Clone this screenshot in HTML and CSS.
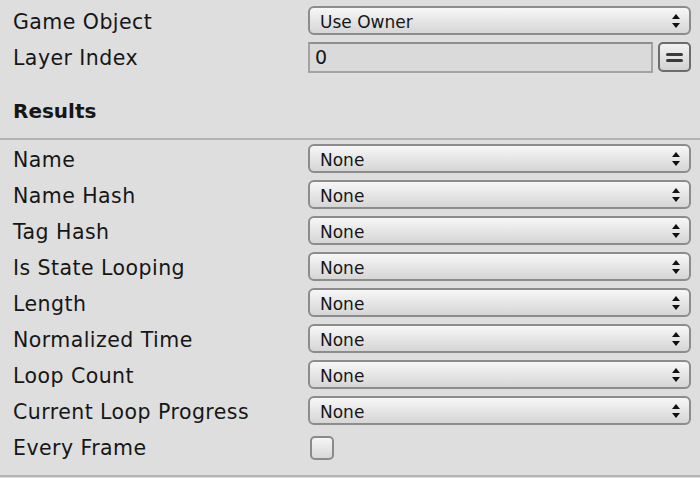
FILE: index.html
```html
<!DOCTYPE html>
<html>
<head>
<meta charset="utf-8">
<link rel="stylesheet" href="styles.css">
</head>
<body>
<div class="panel">
  <div class="row">
    <div class="label">Game Object</div>
    <div class="popup"><span class="ptext">Use Owner</span><span class="arrows"><svg width="8" height="14" viewBox="0 0 8 14"><path d="M4 0 L8 5 L0 5 Z M0 9 L8 9 L4 14 Z" fill="#111"/></svg></span></div>
  </div>
  <div class="row row-field">
    <div class="label label-field">Layer Index</div>
    <div class="fieldwrap">
      <div class="field">0</div>
      <div class="eqbtn"><svg width="17" height="9" viewBox="0 0 17 9"><rect x="0" y="0" width="17" height="3" rx="1.5" fill="#3a3a3a"/><rect x="0" y="6" width="17" height="3" rx="1.5" fill="#3a3a3a"/></svg></div>
    </div>
  </div>
  <div class="header">Results</div>
  <div class="list">
    <div class="row"><div class="label">Name</div><div class="popup"><span class="ptext">None</span><span class="arrows"><svg width="8" height="14" viewBox="0 0 8 14"><path d="M4 0 L8 5 L0 5 Z M0 9 L8 9 L4 14 Z" fill="#111"/></svg></span></div></div>
    <div class="row"><div class="label">Name Hash</div><div class="popup"><span class="ptext">None</span><span class="arrows"><svg width="8" height="14" viewBox="0 0 8 14"><path d="M4 0 L8 5 L0 5 Z M0 9 L8 9 L4 14 Z" fill="#111"/></svg></span></div></div>
    <div class="row"><div class="label">Tag Hash</div><div class="popup"><span class="ptext">None</span><span class="arrows"><svg width="8" height="14" viewBox="0 0 8 14"><path d="M4 0 L8 5 L0 5 Z M0 9 L8 9 L4 14 Z" fill="#111"/></svg></span></div></div>
    <div class="row"><div class="label">Is State Looping</div><div class="popup"><span class="ptext">None</span><span class="arrows"><svg width="8" height="14" viewBox="0 0 8 14"><path d="M4 0 L8 5 L0 5 Z M0 9 L8 9 L4 14 Z" fill="#111"/></svg></span></div></div>
    <div class="row"><div class="label">Length</div><div class="popup"><span class="ptext">None</span><span class="arrows"><svg width="8" height="14" viewBox="0 0 8 14"><path d="M4 0 L8 5 L0 5 Z M0 9 L8 9 L4 14 Z" fill="#111"/></svg></span></div></div>
    <div class="row"><div class="label">Normalized Time</div><div class="popup"><span class="ptext">None</span><span class="arrows"><svg width="8" height="14" viewBox="0 0 8 14"><path d="M4 0 L8 5 L0 5 Z M0 9 L8 9 L4 14 Z" fill="#111"/></svg></span></div></div>
    <div class="row"><div class="label">Loop Count</div><div class="popup"><span class="ptext">None</span><span class="arrows"><svg width="8" height="14" viewBox="0 0 8 14"><path d="M4 0 L8 5 L0 5 Z M0 9 L8 9 L4 14 Z" fill="#111"/></svg></span></div></div>
    <div class="row"><div class="label">Current Loop Progress</div><div class="popup"><span class="ptext">None</span><span class="arrows"><svg width="8" height="14" viewBox="0 0 8 14"><path d="M4 0 L8 5 L0 5 Z M0 9 L8 9 L4 14 Z" fill="#111"/></svg></span></div></div>
    <div class="row row-check"><div class="label">Every Frame</div><div class="checkcell"><div class="checkbox"></div></div></div>
  </div>
  <div class="footer"></div>
</div>
</body>
</html>
```
FILE: styles.css
```css
html, body {
  margin: 0;
  padding: 0;
  background: #dedede;
}
body {
  width: 700px;
  height: 478px;
  overflow: hidden;
  font-family: "DejaVu Sans", sans-serif;
  color: #161616;
}
.panel {
  padding-top: 6px;
}
.row {
  display: grid;
  grid-template-columns: 295px 383px;
  padding-left: 13px;
  height: 29px;
  margin-bottom: 7px;
  align-items: center;
}
.label {
  font-size: 20.5px;
  letter-spacing: 0.45px;
  line-height: 24px;
  white-space: nowrap;
  padding-top: 2px;
}
.label-field {
  padding-top: 0;
}
.popup {
  box-sizing: border-box;
  height: 29px;
  border: 2px solid #8c8c8c;
  border-radius: 6px;
  background: linear-gradient(#f7f7f7, #e6e6e6 50%, #d6d6d6);
  display: flex;
  align-items: center;
  justify-content: space-between;
  padding: 0 9px 0 10px;
  font-size: 17px;
}
.ptext {
  padding-top: 2px;
}
.arrows {
  display: flex;
  align-items: center;
}
.arrows svg { display: block; }
.row-field {
  height: 31px;
  margin-bottom: 0;
}
.fieldwrap {
  display: flex;
  gap: 5px;
  height: 31px;
}
.field {
  flex: 1;
  box-sizing: border-box;
  border: 2px solid #a3a3a3;
  border-top-color: #8e8e8e;
  background: #dadada;
  font-size: 19px;
  padding-left: 5px;
  line-height: 27px;
}
.eqbtn {
  box-sizing: border-box;
  width: 33px;
  height: 30px;
  border: 2px solid #6c6c6c;
  border-radius: 5px;
  background: linear-gradient(#f2f2f2, #d2d2d2);
  display: flex;
  align-items: center;
  justify-content: center;
}
.eqbtn svg { display: block; }
.header {
  box-sizing: border-box;
  height: 67px;
  padding-top: 26px;
  padding-left: 13px;
  font-size: 20px;
  line-height: 24px;
  font-weight: bold;
  border-bottom: 2px solid #b3b3b3;
}
.list {
  padding-top: 4px;
}
.checkcell {
  display: flex;
  align-items: center;
  padding-left: 2px;
  padding-top: 3px;
}
.checkbox {
  box-sizing: border-box;
  width: 24px;
  height: 24px;
  border: 2px solid #8a8a8a;
  border-radius: 5px;
  background: linear-gradient(#f5f5f5, #d8d8d8);
}
.footer {
  margin-top: 14px;
  border-top: 2px solid #b3b3b3;
  height: 4px;
}
```
